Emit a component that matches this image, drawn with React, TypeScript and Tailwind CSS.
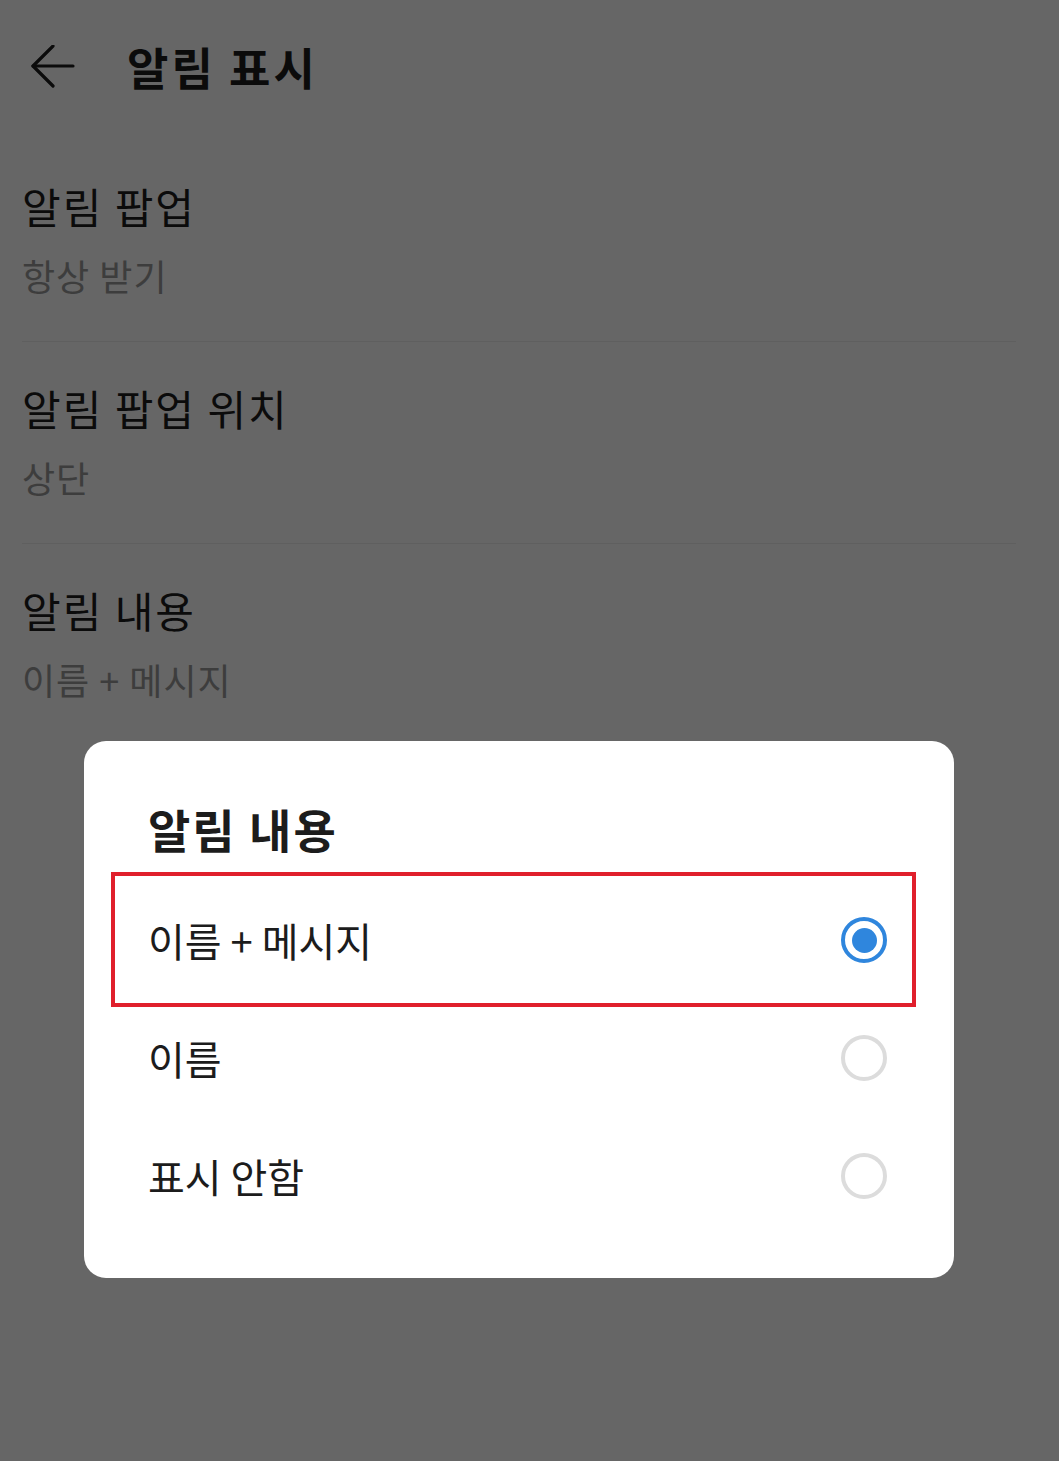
import React from 'react';

const font = { fontFamily: '"Noto Sans CJK KR", "Noto Sans", sans-serif' };

const settings = [
  { title: '알림 팝업', value: '항상 받기' },
  { title: '알림 팝업 위치', value: '상단' },
  { title: '알림 내용', value: '이름 + 메시지' },
];

const options = ['이름 + 메시지', '이름', '표시 안함'];

const BackArrow = () => (
  <svg width="46" height="46" viewBox="0 0 46 46" fill="none" stroke="currentColor" strokeWidth="3.2" strokeLinecap="round" strokeLinejoin="round">
    <path d="M43 21H3" />
    <path d="M23 1L3 21l20 20" />
  </svg>
);

const Radio = ({ checked }: { checked: boolean }) =>
  checked ? (
    <div className="flex h-[46px] w-[46px] items-center justify-center rounded-full border-[4px] border-[#2f86dd]">
      <div className="h-[25px] w-[25px] rounded-full bg-[#2f86dd]" />
    </div>
  ) : (
    <div className="h-[46px] w-[46px] rounded-full border-[4px] border-[#dcdcdc]" />
  );

export default function App() {
  return (
    <div className="relative h-[1461px] w-[1059px] overflow-hidden bg-white text-[#1c1c1c]" style={font}>
      {/* settings page */}
      <div className="flex h-[133px] items-center">
        <div className="ml-[30px] mt-[2px] text-[#1c1c1c]">
          <BackArrow />
        </div>
        <h1 className="ml-[51px] text-[45px] font-bold leading-none tracking-[3px]">알림 표시</h1>
      </div>

      <div className="ml-[22px] mr-[43px] pt-[52px]">
        {settings.map((s, i) => (
          <div key={s.title} className={`${i > 0 ? 'pt-[45px]' : ''} ${i < settings.length - 1 ? 'border-b border-[#eeeeee] pb-[48px]' : ''}`}>
            <div className="text-[42px] leading-none tracking-[2px]">{s.title}</div>
            <div className="mt-[30px] text-[36px] leading-none tracking-[1px] text-[#999999]">{s.value}</div>
          </div>
        ))}
      </div>

      {/* scrim */}
      <div className="absolute inset-0 bg-black/60" />

      {/* dialog */}
      <div className="absolute left-[84px] top-[741px] h-[537px] w-[870px] rounded-[22px] bg-white">
        <div className="pl-[64px] pt-[64px] text-[46px] font-bold leading-none tracking-[2px] text-[#1c1c1c]">알림 내용</div>
        <div className="mt-[30px]">
          {options.map((o, i) => (
            <div key={o} className="flex h-[118px] items-center justify-between pl-[64px] pr-[67px]">
              <span className="text-[40px] leading-none text-[#1c1c1c]">{o}</span>
              <Radio checked={i === 0} />
            </div>
          ))}
        </div>
        <div className="absolute left-[27px] top-[131px] h-[135px] w-[805px] border-[4px] border-[#e01f2c]" />
      </div>
    </div>
  );
}
